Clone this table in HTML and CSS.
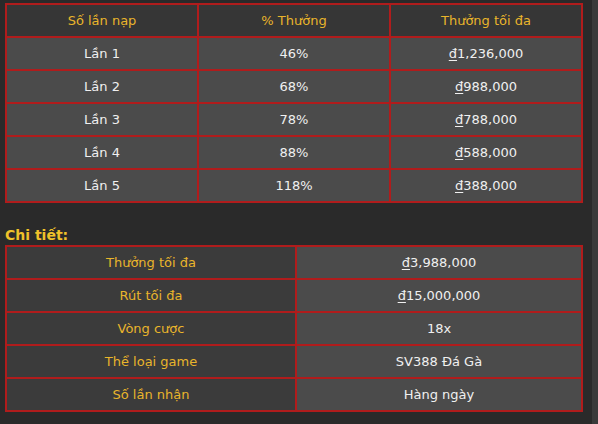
FILE: index.html
```html
<!DOCTYPE html>
<html lang="vi">
<head>
<meta charset="utf-8">
<link rel="stylesheet" href="styles.css">
</head>
<body>
<div class="page">
  <main class="content">
    <table class="rates">
      <thead>
        <tr><th>Số lần nạp</th><th>% Thưởng</th><th>Thưởng tối đa</th></tr>
      </thead>
      <tbody>
        <tr><td>Lần 1</td><td>46%</td><td><u>đ</u>1,236,000</td></tr>
        <tr><td>Lần 2</td><td>68%</td><td><u>đ</u>988,000</td></tr>
        <tr><td>Lần 3</td><td>78%</td><td><u>đ</u>788,000</td></tr>
        <tr><td>Lần 4</td><td>88%</td><td><u>đ</u>588,000</td></tr>
        <tr><td>Lần 5</td><td>118%</td><td><u>đ</u>388,000</td></tr>
      </tbody>
    </table>
    <h3 class="title">Chi tiết:</h3>
    <table class="details">
      <tbody>
        <tr><th>Thưởng tối đa</th><td><u>đ</u>3,988,000</td></tr>
        <tr><th>Rút tối đa</th><td><u>đ</u>15,000,000</td></tr>
        <tr><th>Vòng cược</th><td>18x</td></tr>
        <tr><th>Thể loại game</th><td>SV388 Đá Gà</td></tr>
        <tr><th>Số lần nhận</th><td>Hàng ngày</td></tr>
      </tbody>
    </table>
  </main>
  <div class="scrollbar"></div>
</div>
</body>
</html>
```
FILE: styles.css
```css
html, body {
  margin: 0;
  padding: 0;
  background: #2a2a2a;
  height: 100%;
}
.page {
  display: flex;
  height: 424px;
  font-family: "DejaVu Sans", sans-serif;
  font-size: 13px;
  color: #f0f0f0;
}
.content {
  width: 578px;
  padding: 3px 0 0 5px;
}
.scrollbar {
  margin-left: auto;
  width: 6px;
  background: #3a3a3a;
}
table {
  width: 578px;
  border-collapse: collapse;
  table-layout: fixed;
}
th, td {
  border: 2px solid #b01c1c;
  height: 31px;
  padding: 0;
  text-align: center;
  font-weight: normal;
}
.rates th {
  background: #363636;
  color: #e9b52b;
}
.rates td {
  background: #4b4b4b;
}
u {
  text-decoration: underline;
  text-underline-offset: 2px;
}
.title {
  margin: 0;
  padding: 24px 0 2px 0;
  font-size: 14px;
  font-weight: bold;
  color: #efc22a;
  line-height: 16px;
}
.details th {
  width: 288px;
  background: #3b3b3b;
  color: #e9b52b;
}
.details td {
  background: #4b4b4b;
}
```
